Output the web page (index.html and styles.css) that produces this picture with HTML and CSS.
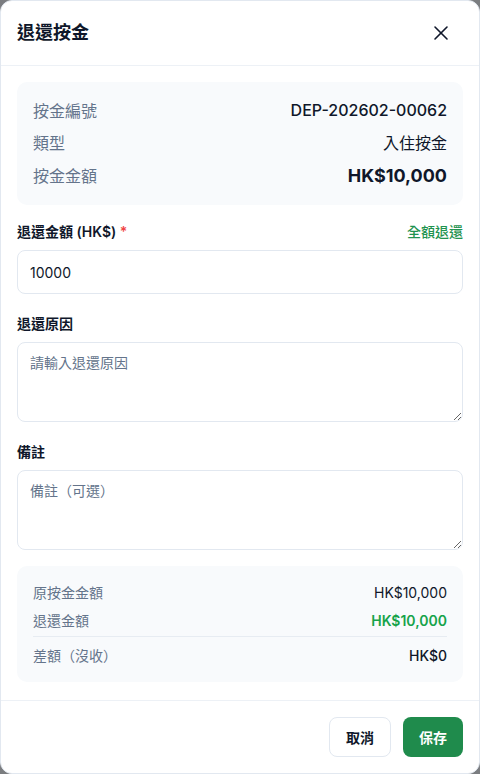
FILE: index.html
```html
<!DOCTYPE html>
<html lang="zh-Hant">
<head>
<meta charset="utf-8">
<title>退還按金</title>
<link rel="stylesheet" href="styles.css">
</head>
<body>
<div class="modal">
  <div class="modal-header">
    <h2 class="modal-title">退還按金</h2>
    <button class="close-btn" aria-label="關閉">
      <svg width="24" height="24" viewBox="0 0 24 24" fill="none" stroke="currentColor" stroke-width="1.6" stroke-linecap="round" stroke-linejoin="round"><path d="M18 6 6 18"/><path d="m6 6 12 12"/></svg>
    </button>
  </div>
  <div class="modal-body">
    <div class="info-card">
      <div class="info-row"><span class="info-label">按金編號</span><span class="info-value">DEP-202602-00062</span></div>
      <div class="info-row"><span class="info-label">類型</span><span class="info-value info-value-cjk">入住按金</span></div>
      <div class="info-row info-row-total"><span class="info-label">按金金額</span><span class="info-value info-value-big">HK$10,000</span></div>
    </div>

    <div class="field field-first">
      <div class="field-label-row">
        <label class="field-label">退還金額 (HK$) <span class="req">*</span></label>
        <a class="full-link">全額退還</a>
      </div>
      <input class="text-input" type="text" value="10000">
    </div>

    <div class="field">
      <label class="field-label">退還原因</label>
      <textarea class="text-area" placeholder="請輸入退還原因"></textarea>
    </div>

    <div class="field">
      <label class="field-label">備註</label>
      <textarea class="text-area" placeholder="備註（可選）"></textarea>
    </div>

    <div class="summary-card">
      <div class="sum-row"><span class="sum-label">原按金金額</span><span class="sum-value">HK$10,000</span></div>
      <div class="sum-row"><span class="sum-label">退還金額</span><span class="sum-value sum-green">HK$10,000</span></div>
      <div class="sum-row sum-diff"><span class="sum-label">差額（沒收）</span><span class="sum-value sum-bold">HK$0</span></div>
    </div>
  </div>
  <div class="modal-footer">
    <button class="btn btn-cancel">取消</button>
    <button class="btn btn-save">保存</button>
  </div>
</div>
</body>
</html>
```

FILE: styles.css
```css
* { box-sizing: border-box; }
html, body { margin: 0; padding: 0; }
body {
  background: #7b7d80;
  font-family: Inter, "Noto Sans CJK TC", sans-serif;
  color: #0f172a;
  width: 480px;
  height: 774px;
  overflow: hidden;
}
.modal {
  width: 480px;
  height: 774px;
  background: #fff;
  border: 1px solid #e2e8f0;
  border-radius: 12px;
  display: flex;
  flex-direction: column;
  overflow: hidden;
}
.modal-header {
  height: 65px;
  flex: none;
  display: flex;
  align-items: center;
  justify-content: space-between;
  padding: 0 16px 0 16px;
  border-bottom: 1px solid #edf1f6;
}
.modal-title {
  margin: 0;
  font-size: 18px;
  font-weight: 700;
  line-height: 28px;
  color: #0f172a;
}
.close-btn {
  border: 0;
  background: none;
  padding: 0;
  margin-right: 10px;
  width: 24px;
  height: 24px;
  color: #0f172a;
  display: flex;
  cursor: pointer;
}
.modal-body {
  flex: 1;
  padding: 16px 16px 16px;
  display: flex;
  flex-direction: column;
}
.info-card {
  background: #f8fafc;
  border-radius: 10px;
  padding: 16px;
  display: flex;
  flex-direction: column;
  gap: 8px;
}
.info-row {
  display: flex;
  justify-content: space-between;
  align-items: center;
  height: 24px;
  font-size: 16px;
}
.info-row-total { height: 28px; margin-top: -1px; }
.info-label { color: #64748b; }
.info-value { color: #0f172a; font-weight: 500; }
.info-value-cjk { font-weight: 400; }
.info-value-big { font-size: 18px; font-weight: 700; }

.field { margin-top: 20px; display: flex; flex-direction: column; gap: 8px; }
.field-first { margin-top: 17px; }
.field-label-row { display: flex; justify-content: space-between; align-items: center; }
.field-label {
  font-size: 14px;
  font-weight: 600;
  line-height: 20px;
  color: #0f172a;
}
.req { color: #ef4444; }
.full-link {
  font-size: 14px;
  font-weight: 500;
  line-height: 20px;
  color: #1f9350;
  cursor: pointer;
}
.text-input {
  height: 44px;
  border: 1px solid #e2e8f0;
  border-radius: 8px;
  padding: 0 12px;
  font-family: inherit;
  font-size: 14px;
  color: #0f172a;
  background: #fff;
  outline: none;
}
.text-area {
  height: 80px;
  border: 1px solid #e2e8f0;
  border-radius: 8px;
  padding: 10px 12px;
  font-family: inherit;
  font-size: 14px;
  line-height: 20px;
  color: #0f172a;
  background: #fff;
  outline: none;
  resize: vertical;
}
.text-area::placeholder { color: #64748b; }

.summary-card {
  margin-top: 16px;
  background: #f8fafc;
  border-radius: 10px;
  padding: 16px;
  display: flex;
  flex-direction: column;
  gap: 8px;
}
.sum-row {
  display: flex;
  justify-content: space-between;
  align-items: center;
  height: 20px;
  font-size: 14px;
}
.sum-diff {
  height: auto;
  margin-top: -2px;
  padding-top: 9px;
  border-top: 1.5px solid #e7ecf2;
  line-height: 20px;
}
.sum-label { color: #64748b; }
.sum-value { color: #0f172a; }
.sum-green { color: #16a34a; font-weight: 600; }
.sum-bold { font-weight: 500; }

.modal-footer {
  flex: none;
  border-top: 1px solid #edf1f6;
  padding: 16px;
  display: flex;
  justify-content: flex-end;
  gap: 12px;
}
.btn {
  height: 40px;
  padding: 0 16px;
  border-radius: 8px;
  font-family: inherit;
  font-size: 14px;
  font-weight: 600;
  cursor: pointer;
}
.btn-cancel {
  background: #fff;
  border: 1px solid #e2e8f0;
  color: #0f172a;
}
.btn-save {
  background: #1f8b4c;
  border: 0;
  color: #fff;
}
```
